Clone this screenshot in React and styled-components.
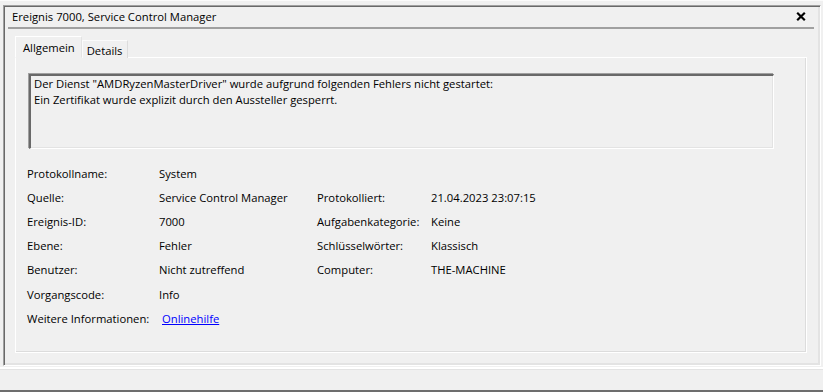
import React from "react";
import styled, { createGlobalStyle } from "styled-components";

const FONT = `"Open Sans", "Noto Sans", sans-serif`;
const FS = "11.25px";

const Global = createGlobalStyle`
  html, body { margin: 0; padding: 0; background: #f0f0f0; }
  body { font-family: ${FONT}; font-size: ${FS}; color: #000; overflow: hidden; }
  #root { width: 823px; height: 392px; display: flex; flex-direction: column; }
`;

const Page = styled.div`
  width: 823px;
  height: 392px;
  display: flex;
  flex-direction: column;
  background: #f0f0f0;
  border-top: 1px solid #fbfbfb;
  box-sizing: border-box;
`;

const Frame = styled.div`
  margin: 4px 2px 0 3px;
  display: flex;
  flex-direction: column;
  padding-bottom: 12px;
  border-top: 1px solid #a0a0a0;
  border-left: 1px solid #a0a0a0;
  border-right: 1px solid #ffffff;
  border-bottom: 1px solid #ffffff;
  box-shadow: inset 1px 1px 0 #696969, inset -2px -2px 0 #e3e3e3;
`;

const Header = styled.div`
  margin: 0 6px 0 4px;
  height: 21px;
  padding-left: 4px;
  display: flex;
  align-items: center;
  justify-content: space-between;
  border-bottom: 2px solid #a0a0a0;
`;

const Title = styled.span`
  font-size: ${FS};
  line-height: 21px;
`;

const CloseButton = styled.button`
  border: none;
  background: transparent;
  padding: 0;
  margin-right: 8px;
  width: 11px;
  height: 11px;
  display: flex;
  align-items: center;
  justify-content: center;
`;

const Body = styled.div`
  margin: 7px 13px 0 11px;
  display: flex;
  flex-direction: column;
`;

const TabStrip = styled.div`
  display: flex;
  align-items: flex-end;
  margin-bottom: -1px;
  position: relative;
  z-index: 1;
`;

const Tab = styled.div`
  box-sizing: border-box;
  height: ${(p) => (p.$active ? "22px" : "18px")};
  padding: ${(p) => (p.$active ? "0 6px 0 7px" : "2px 4px 0 4px")};
  display: flex;
  align-items: center;
  font-size: ${FS};
  background: #f0f0f0;
  border-top: 1px solid ${(p) => (p.$active ? "#ffffff" : "#fbfbfb")};
  border-left: 1px solid ${(p) => (p.$active ? "#ffffff" : "#fbfbfb")};
  border-right: 1px solid ${(p) => (p.$active ? "#e3e3e3" : "#dcdcdc")};
  border-bottom: ${(p) => (p.$active ? "1px solid #f0f0f0" : "none")};
`;

const Panel = styled.div`
  height: 296px;
  box-sizing: border-box;
  border: 1px solid #ffffff;
  box-shadow: inset -1px -1px 0 #dcdcdc;
  display: flex;
  flex-direction: column;
`;

const MessageBox = styled.div`
  margin: 16px 32px 0 13px;
  height: 75px;
  box-sizing: border-box;
  padding: 0 3px;
  border-top: 2px solid #696969;
  border-left: 2px solid #696969;
  border-right: 1px solid #ffffff;
  border-bottom: 1px solid #ffffff;
  box-shadow: -1px -1px 0 #a0a0a0, inset -1px -1px 0 #e3e3e3;
  font-size: ${FS};
  line-height: 16px;
`;

const Line = styled.div`
  white-space: nowrap;
`;

const Grid = styled.div`
  margin: 12px 0 0 11px;
  display: grid;
  grid-template-columns: 132px 158px 114px 1fr;
  grid-auto-rows: 24.2px;
  align-items: center;
  font-size: ${FS};
`;

const Cell = styled.span`
  white-space: nowrap;
`;

const Link = styled.a`
  color: #0000ff;
  text-decoration: underline;
  margin-left: 3px;
  cursor: pointer;
`;

const Footer = styled.div`
  flex: 1;
  border-top: 2px solid #ffffff;
  box-shadow: inset 0 1px 0 #e3e3e3;
  margin-top: 1px;
  border-bottom: 2px solid #6d6d6d;
  margin-bottom: 0;
`;

const rows = [
  ["Protokollname:", "System", "", ""],
  ["Quelle:", "Service Control Manager", "Protokolliert:", "21.04.2023 23:07:15"],
  ["Ereignis-ID:", "7000", "Aufgabenkategorie:", "Keine"],
  ["Ebene:", "Fehler", "Schlüsselwörter:", "Klassisch"],
  ["Benutzer:", "Nicht zutreffend", "Computer:", "THE-MACHINE"],
  ["Vorgangscode:", "Info", "", ""],
];

export default function App() {
  return (
    <Page>
      <Global />
      <Frame>
        <Header>
          <Title>Ereignis 7000, Service Control Manager</Title>
          <CloseButton aria-label="Schließen">
            <svg width="10" height="9" viewBox="0 0 10 9">
              <path d="M1.2 0.8 L8.8 8.2 M8.8 0.8 L1.2 8.2" stroke="#000" strokeWidth="2.2" />
            </svg>
          </CloseButton>
        </Header>
        <Body>
          <TabStrip>
            <Tab $active>Allgemein</Tab>
            <Tab>Details</Tab>
          </TabStrip>
          <Panel>
            <MessageBox>
              <Line>Der Dienst "AMDRyzenMasterDriver" wurde aufgrund folgenden Fehlers nicht gestartet:</Line>
              <Line>Ein Zertifikat wurde explizit durch den Aussteller gesperrt.</Line>
            </MessageBox>
            <Grid>
              {rows.map((r, i) =>
                r.map((c, j) => <Cell key={`${i}-${j}`}>{c}</Cell>)
              )}
              <Cell>Weitere Informationen:</Cell>
              <Cell>
                <Link>Onlinehilfe</Link>
              </Cell>
            </Grid>
          </Panel>
        </Body>
      </Frame>
      <Footer />
    </Page>
  );
}
